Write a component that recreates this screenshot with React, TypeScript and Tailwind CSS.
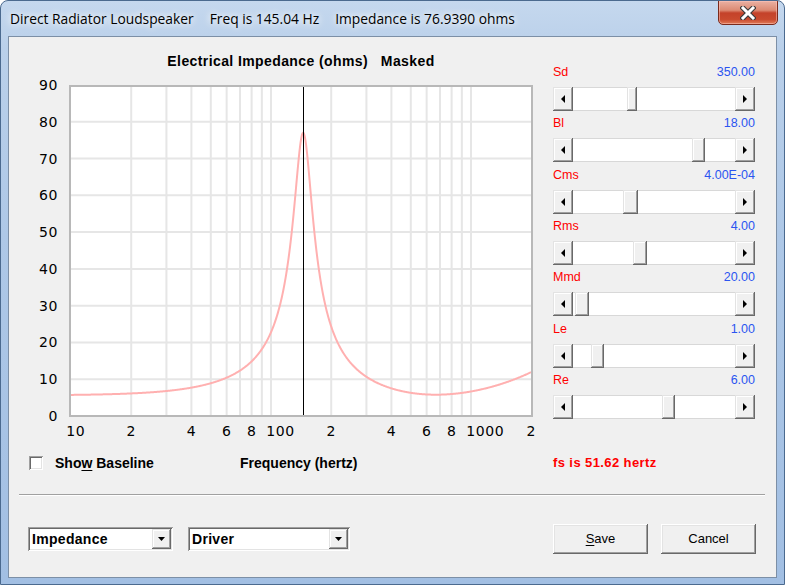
import React from 'react';

const raised =
  'bg-[#f0f0f0] shadow-[inset_-1px_-1px_0_#696969,inset_1px_1px_0_#e3e3e3,inset_-2px_-2px_0_#a0a0a0,inset_2px_2px_0_#ffffff]';
const buttonRaised =
  'bg-[#f0f0f0] shadow-[inset_-1px_-1px_0_#696969,inset_1px_1px_0_#ffffff,inset_-2px_-2px_0_#a0a0a0,inset_2px_2px_0_#e3e3e3]';
const sunken =
  'bg-white shadow-[inset_1px_1px_0_#a0a0a0,inset_-1px_-1px_0_#ffffff,inset_2px_2px_0_#696969,inset_-2px_-2px_0_#e3e3e3]';

const sliders = [
  { name: 'Sd', value: '350.00', left: 54, width: 10 },
  { name: 'Bl', value: '18.00', left: 119, width: 13 },
  { name: 'Cms', value: '4.00E-04', left: 50, width: 15 },
  { name: 'Rms', value: '4.00', left: 60, width: 14 },
  { name: 'Mmd', value: '20.00', left: 2, width: 14 },
  { name: 'Le', value: '1.00', left: 18, width: 13 },
  { name: 'Re', value: '6.00', left: 89, width: 13 },
];

function Arrow({ dir }: { dir: 'l' | 'r' }) {
  return (
    <svg width="4" height="8" viewBox="0 0 4 8">
      <polygon points={dir === 'l' ? '4,0 4,8 0,4' : '0,0 0,8 4,4'} fill="#000" />
    </svg>
  );
}

function DownArrow() {
  return (
    <svg width="7" height="4" viewBox="0 0 7 4">
      <polygon points="0,0 7,0 3.5,4" fill="#000" />
    </svg>
  );
}

function ScrollBar({ left, width }: { left: number; width: number }) {
  return (
    <div className="flex h-[24px] w-[202px]">
      <div className={`${raised} flex w-[20px] items-center justify-center`}>
        <Arrow dir="l" />
      </div>
      <div className="relative flex-1 border-y border-[#d8d8d8] bg-white">
        <div className={`${raised} absolute top-[-1px] bottom-[-1px]`} style={{ left, width }} />
      </div>
      <div className={`${raised} flex w-[20px] items-center justify-center`}>
        <Arrow dir="r" />
      </div>
    </div>
  );
}

function xOf(f: number) {
  return 71 + 200 * Math.log10(f / 10);
}

function curvePath() {
  const Re = 5.6,
    Le = 0.00093,
    Res = 71.4,
    fs = 145,
    Q = 4.5;
  const pts: string[] = [];
  for (let x = 71; x <= 531; x += 0.5) {
    const f = Math.pow(10, 1 + (x - 71) / 200);
    const w = 2 * Math.PI * f;
    const yv = Q * (f / fs - fs / f);
    const d = 1 + yv * yv;
    const zr = Re + Res / d;
    const zi = w * Le - (Res * yv) / d;
    const z = Math.sqrt(zr * zr + zi * zi);
    const y = 416 - z * 3.678;
    pts.push(`${x.toFixed(1)},${y.toFixed(2)}`);
  }
  return 'M' + pts.join(' L');
}

function Chart() {
  const hLines = [1, 2, 3, 4, 5, 6, 7, 8].map((i) => 416 - i * 36.78);
  const freqs = [20, 30, 40, 50, 60, 70, 80, 90, 100, 200, 300, 400, 500, 600, 700, 800, 900, 1000];
  const yLabels = [0, 10, 20, 30, 40, 50, 60, 70, 80, 90];
  const xLabels: [string, number][] = [
    ['10', 10],
    ['2', 20],
    ['4', 40],
    ['6', 60],
    ['8', 80],
    ['100', 100],
    ['2', 200],
    ['4', 400],
    ['6', 600],
    ['8', 800],
    ['1000', 1000],
    ['2', 2000],
  ];
  return (
    <svg className="mt-[7px] block" width="544" height="370" viewBox="9 76 544 370">
      <rect x="70" y="86" width="462" height="330" fill="#ffffff" />
      {hLines.map((y, i) => (
        <line key={'h' + i} x1="71" x2="531" y1={y} y2={y} stroke="#e6e6e6" strokeWidth="2" />
      ))}
      {freqs.map((f) => (
        <line key={'v' + f} x1={xOf(f)} x2={xOf(f)} y1="87" y2="415" stroke="#e6e6e6" strokeWidth="2" />
      ))}
      <path d={curvePath()} fill="none" stroke="#ffb0b0" strokeWidth="2" />
      <line x1="303.5" x2="303.5" y1="87" y2="415" stroke="#000" strokeWidth="1" />
      <rect x="70" y="86" width="462" height="330" fill="none" stroke="#b8b8b8" strokeWidth="2" />
      {yLabels.map((v) => (
        <text
          key={'yl' + v}
          x="58"
          y={416 - v * 3.678 + 5}
          textAnchor="end"
          fontFamily="DejaVu Sans, sans-serif"
          fontSize="14"
          letterSpacing="0.6"
          fill="#000"
        >
          {v}
        </text>
      ))}
      {xLabels.map(([t, f], i) => (
        <text
          key={'xl' + i}
          x={xOf(f) - 4.7}
          y="436"
          fontFamily="DejaVu Sans, sans-serif"
          fontSize="14"
          letterSpacing="0.6"
          fill="#000"
        >
          {t}
        </text>
      ))}
    </svg>
  );
}

export default function App() {
  return (
    <div className="relative h-[585px] w-[785px] overflow-hidden rounded-t-[8px] border border-[#4b6a8f] bg-[linear-gradient(180deg,#c5d8ee_0%,#bad0ea_8%,#aec8e7_40%,#a2bfe3_100%)] font-['Liberation_Sans',Arial,sans-serif] text-black">
      {/* title bar */}
      <div className="flex h-[35px] items-start">
        <div className="flex gap-[16px] pl-[9px] pt-[8px] font-['Open_Sans',sans-serif] text-[13.8px] leading-[20px] [text-shadow:0_0_10px_#ffffff,0_0_6px_#ffffff]">
          <span>Direct Radiator Loudspeaker</span>
          <span>Freq is 145.04 Hz</span>
          <span>Impedance is 76.9390 ohms</span>
        </div>
        <div className="mt-[-1px] mr-[6px] ml-auto flex h-[25px] w-[60px] items-center justify-center rounded-b-[5px] border border-[#7a2a1c] bg-[linear-gradient(180deg,#eab1a3_0%,#dc8a73_40%,#c4422a_52%,#c94a2e_80%,#e07b58_100%)] shadow-[inset_0_0_0_1px_rgba(255,200,190,0.5)]">
          <svg width="16" height="14" viewBox="0 0 16 14">
            <path d="M3 2 L13 12 M13 2 L3 12" stroke="#3b3b3b" strokeWidth="5.2" strokeLinecap="square" />
            <path d="M3 2 L13 12 M13 2 L3 12" stroke="#ffffff" strokeWidth="3" strokeLinecap="square" />
          </svg>
        </div>
      </div>

      {/* client area */}
      <div className="ml-[7px] flex h-[542px] w-[769px] flex-col border border-[#7c8fa6] bg-[#f0f0f0]">
        <div className="flex h-[457px]">
          {/* left: chart */}
          <div className="flex w-[544px] flex-col">
            <div className="mt-[16px] ml-[60px] h-[16px] w-[464px] whitespace-pre text-center text-[14px] leading-[16px] font-bold tracking-[0.4px]">
              {'Electrical Impedance (ohms)   Masked'}
            </div>
            <Chart />
            <div className="mt-[9px] flex h-[16px] items-center">
              <div className="flex w-[231px] items-center">
                <div className={`${sunken} ml-[20px] h-[14px] w-[14px]`} />
                <span className="ml-[12px] text-[14px] leading-[16px] font-bold">
                  Sho<span className="underline underline-offset-2">w</span> Baseline
                </span>
              </div>
              <span className="text-[14px] leading-[16px] font-bold">Frequency (hertz)</span>
            </div>
          </div>

          {/* right: sliders */}
          <div className="flex w-[203px] flex-col pt-[28px]">
            <div className="flex flex-col gap-[5.33px]">
              {sliders.map((s) => (
                <div key={s.name} className="flex flex-col">
                  <div className="flex h-[14px] w-[202px] items-center justify-between text-[12.5px] leading-[14px]">
                    <span className="text-[#ff0000]">{s.name}</span>
                    <span className="text-[#2b55f0]">{s.value}</span>
                  </div>
                  <div className="mt-[8px]">
                    <ScrollBar left={s.left} width={s.width} />
                  </div>
                </div>
              ))}
            </div>
            <div className="mt-[36px] h-[16px] text-[13px] leading-[16px] font-bold tracking-[0.4px] text-[#ff0000]">
              fs is 51.62 hertz
            </div>
          </div>
        </div>

        {/* separator */}
        <div className="ml-[10px] h-[2px] w-[746px] border-t border-b border-t-[#a0a0a0] border-b-white" />

        {/* bottom row */}
        <div className="mt-[28px] flex h-[30px] items-center">
          <div className={`${sunken} relative ml-[19px] flex h-[24px] w-[145px] items-center`}>
            <span className="pl-[4px] text-[14px] font-bold tracking-[0.3px]">Impedance</span>
            <div className={`${raised} absolute top-[2px] right-[2px] bottom-[2px] flex w-[19px] items-center justify-center`}>
              <DownArrow />
            </div>
          </div>
          <div className={`${sunken} relative ml-[15px] flex h-[24px] w-[162px] items-center`}>
            <span className="pl-[4px] text-[14px] font-bold tracking-[0.3px]">Driver</span>
            <div className={`${raised} absolute top-[2px] right-[2px] bottom-[2px] flex w-[19px] items-center justify-center`}>
              <DownArrow />
            </div>
          </div>
          <button className={`${buttonRaised} ml-[203px] flex h-[30px] w-[95px] items-center justify-center text-[13px]`}>
            <span>
              <span className="underline underline-offset-2">S</span>ave
            </span>
          </button>
          <button className={`${buttonRaised} ml-[13px] flex h-[30px] w-[95px] items-center justify-center text-[13px]`}>
            Cancel
          </button>
        </div>
      </div>
    </div>
  );
}
